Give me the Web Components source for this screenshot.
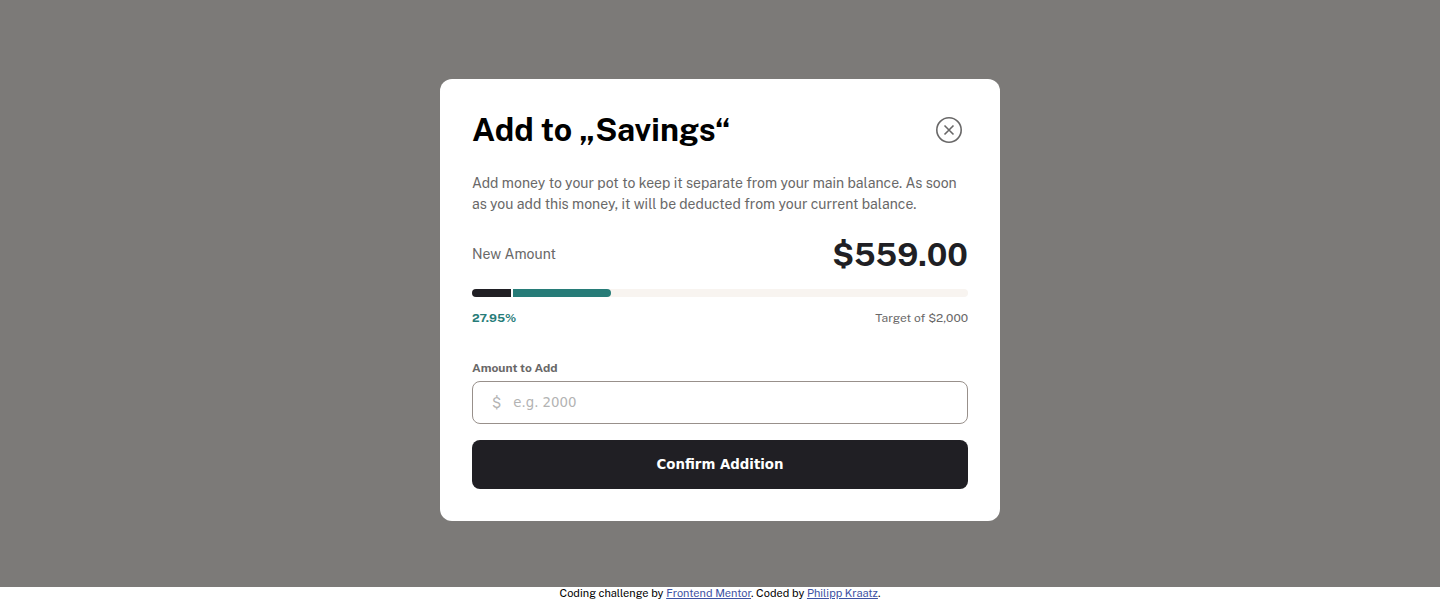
<!DOCTYPE html>
<html lang="en">
<head>
<meta charset="utf-8">
<meta name="viewport" content="width=device-width, initial-scale=1">
<title>Personal finance – Add to pot</title>
<style>
  body { margin: 0; font-family: "Public Sans", Inter, sans-serif; }
</style>
</head>
<body>
<app-shell>
  <pot-dialog heading="Add to „Savings“">
    <p slot="intro">Add money to your pot to keep it separate from your main balance. As soon as you add this money, it will be deducted from your current balance.</p>
    <pot-progress amount="559" previous="159" target="2000"></pot-progress>
    <amount-form label="Amount to Add" action="Confirm Addition"></amount-form>
  </pot-dialog>
  <app-credits slot="footer"></app-credits>
</app-shell>
<script>
  const define = (name, html, setup) => customElements.define(name, class extends HTMLElement {
    connectedCallback() {
      if (this.shadowRoot) return;
      const root = this.attachShadow({ mode: 'open' });
      root.innerHTML = html;
      if (setup) setup(this, root);
    }
  });

  define('app-shell', `
    <style>
      :host { display: flex; flex-direction: column; min-height: 100vh; background: #fff; }
      /* the top padding equals the footer, so the dialog is centred in the window */
      main { flex: 1; box-sizing: border-box; display: grid; place-items: center; padding: 13px 16px 0; background: #7c7a78; }
    </style>
    <main><slot></slot></main>
    <slot name="footer"></slot>
  `);

  define('pot-dialog', `
    <style>
      :host { display: block; box-sizing: border-box; width: 100%; max-width: 560px; padding: 32px; border-radius: 12px; background: #fff; }
      header { display: flex; justify-content: space-between; align-items: center; margin-bottom: 24px; }
      h1 { margin: 0; font-size: 32px; line-height: 38px; font-weight: 700; color: #000; }
      button { flex: none; display: block; padding: 6px; border: 0; background: none; color: #696868; cursor: pointer; }
      svg { display: block; }
      ::slotted(p) { margin: 0 0 20px; font-size: 14px; line-height: 21px; color: #696868; }
    </style>
    <section role="dialog" aria-labelledby="title">
      <header>
        <h1 id="title"></h1>
        <button type="button" aria-label="Close">
          <svg width="26" height="26" viewBox="0 0 26 26" fill="none" stroke="currentColor" stroke-width="1.6">
            <circle cx="13" cy="13" r="12.2"/>
            <path d="M8.5 8.5l9 9M17.5 8.5l-9 9"/>
          </svg>
        </button>
      </header>
      <slot name="intro"></slot>
      <slot></slot>
    </section>
  `, (host, root) => { root.querySelector('h1').textContent = host.getAttribute('heading'); });

  define('pot-progress', `
    <style>
      :host { display: block; margin-bottom: 32px; color: #696868; }
      .row { display: flex; justify-content: space-between; }
      .label { font-size: 14px; line-height: 38px; }
      .amount { font-size: 32px; line-height: 40px; font-weight: 700; color: #201f24; }
      .track { display: flex; height: 8px; margin: 14px 0 12px; border-radius: 4px; overflow: hidden; background: #f8f4f0; }
      .old { background: #201f24; }
      .new { box-sizing: border-box; border-left: 2px solid #fff; border-radius: 0 4px 4px 0; background: #277c78; }
      .small { font-size: 12px; line-height: 18px; }
      .percent { font-weight: 700; color: #277c78; }
    </style>
    <div class="row"><span class="label">New Amount</span><span class="amount"></span></div>
    <div class="track"><div class="old"></div><div class="new"></div></div>
    <div class="row small"><span class="percent"></span><span class="target"></span></div>
  `, (host, root) => {
    const [amount, previous, target] = ['amount', 'previous', 'target'].map(n => Number(host.getAttribute(n)));
    const $ = s => root.querySelector(s);
    $('.amount').textContent = '$' + amount.toFixed(2);
    $('.percent').textContent = (amount / target * 100).toFixed(2) + '%';
    $('.target').textContent = 'Target of $' + target.toLocaleString('en-US');
    $('.old').style.width = previous / target * 100 + '%';
    $('.new').style.width = (amount - previous) / target * 100 + '%';
  });

  define('amount-form', `
    <style>
      :host { display: block; }
      form { display: flex; flex-direction: column; }
      label { margin-bottom: 4px; font-size: 12px; line-height: 18px; font-weight: 700; color: #696868; }
      .field { display: flex; align-items: center; gap: 12px; box-sizing: border-box; height: 43px; padding: 0 19px; border: 1px solid #98908b; border-radius: 8px; color: #b3b3b3; font-size: 14px; line-height: 18px; }
      /* the input and the button keep the browser's own control text size */
      input { flex: 1; min-width: 0; padding: 0; border: 0; outline: 0; background: none; font-family: "DejaVu Sans", sans-serif; color: #201f24; }
      input::placeholder { color: #b3b3b3; }
      button { height: 49px; margin-top: 16px; border: 0; border-radius: 8px; background: #201f24; color: #fff; font-family: "DejaVu Sans", sans-serif; font-weight: 700; cursor: pointer; }
    </style>
    <form>
      <label for="amount"></label>
      <div class="field"><span>$</span><input id="amount" type="text" inputmode="decimal" placeholder="e.g. 2000"></div>
      <button type="submit"></button>
    </form>
  `, (host, root) => {
    root.querySelector('label').textContent = host.getAttribute('label');
    root.querySelector('button').textContent = host.getAttribute('action');
    root.querySelector('form').addEventListener('submit', e => e.preventDefault());
  });

  define('app-credits', `
    <style>
      :host { display: block; font-size: 11px; line-height: 13px; text-align: center; color: #000; }
      a { color: #3e52a3; }
    </style>
    <footer>Coding challenge by <a href="https://www.frontendmentor.io">Frontend Mentor</a>. Coded by <a href="#">Philipp Kraatz</a>.</footer>
  `);
</script>
</body>
</html>
